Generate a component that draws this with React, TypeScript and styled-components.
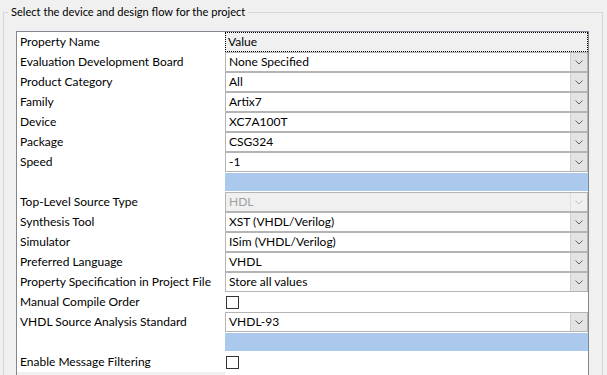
import React from "react";
import styled, { createGlobalStyle } from "styled-components";

const Global = createGlobalStyle`
  html, body { margin: 0; padding: 0; background: #f0f0f0; }
  body { font-family: Lato, "Segoe UI", sans-serif; font-size: 12px; color: #000; }
`;

const Page = styled.div`
  width: 607px;
  height: 375px;
  overflow: hidden;
  padding: 4px 4px 0 3px;
  box-sizing: border-box;
`;

const Group = styled.fieldset`
  margin: 0;
  padding: 11px 13px 40px 12px;
  border: 1px solid #d5d5d5;
  border-radius: 0;
  min-width: 0;
`;

const Legend = styled.legend`
  margin-left: -8px;
  padding: 0 3px;
  line-height: 16px;
  height: 16px;
  font-size: 11.1px;
`;

const Table = styled.div`
  border: 1px solid #828790;
  border-bottom: none;
  background: #ffffff;
  display: grid;
  grid-template-columns: 208px 1fr;
  grid-auto-rows: 20px;
`;

const Label = styled.div<{ $gray?: boolean }>`
  padding-left: 3px;
  line-height: 20px;
  white-space: nowrap;
  background: ${(p) => (p.$gray ? "#f0f0f0" : "#ffffff")};
`;

const HeaderValue = styled.div`
  background: #f0f0f0;
  outline: 1px dotted #000;
  outline-offset: -1px;
  padding-left: 3px;
  line-height: 20px;
`;

const Combo = styled.div<{ $disabled?: boolean }>`
  display: flex;
  border: 1px solid #b4b4b4;
  background: ${(p) => (p.$disabled ? "#f0f0f0" : "#ffffff")};
  color: ${(p) => (p.$disabled ? "#a0a0a0" : "#000")};
  box-sizing: border-box;
  height: 20px;
`;

const ComboText = styled.div`
  flex: 1;
  padding-left: 3px;
  line-height: 18px;
  white-space: nowrap;
`;

const ComboButton = styled.div<{ $disabled?: boolean }>`
  width: 16px;
  background: ${(p) => (p.$disabled ? "#f0f0f0" : "#e3e3e3")};
  border-left: 1px solid ${(p) => (p.$disabled ? "#e0e0e0" : "#cfcfcf")};
  display: flex;
  align-items: center;
  justify-content: center;
`;

const Blank = styled.div`
  background: #abc9ed;
  border-top: 1px solid #ffffff;
  border-bottom: 1px solid #ffffff;
  box-sizing: border-box;
`;

const CheckCell = styled.div`
  display: flex;
  align-items: center;
  padding-left: 1px;
`;

const Box = styled.div`
  width: 11px;
  height: 11px;
  border: 1px solid #333333;
  background: #fff;
`;

const WhiteCell = styled.div`
  background: #fff;
`;

const Chevron = ({ color }: { color: string }) => (
  <svg width="8" height="5" viewBox="0 0 8 5">
    <path d="M0.5 0.5 L4 4 L7.5 0.5" fill="none" stroke={color} strokeWidth="1" />
  </svg>
);

type Row =
  | { kind: "combo"; label: string; value: string; disabled?: boolean }
  | { kind: "check"; label: string }
  | { kind: "blank" };

const rows: Row[] = [
  { kind: "combo", label: "Evaluation Development Board", value: "None Specified" },
  { kind: "combo", label: "Product Category", value: "All" },
  { kind: "combo", label: "Family", value: "Artix7" },
  { kind: "combo", label: "Device", value: "XC7A100T" },
  { kind: "combo", label: "Package", value: "CSG324" },
  { kind: "combo", label: "Speed", value: "-1" },
  { kind: "blank" },
  { kind: "combo", label: "Top-Level Source Type", value: "HDL", disabled: true },
  { kind: "combo", label: "Synthesis Tool", value: "XST (VHDL/Verilog)" },
  { kind: "combo", label: "Simulator", value: "ISim (VHDL/Verilog)" },
  { kind: "combo", label: "Preferred Language", value: "VHDL" },
  { kind: "combo", label: "Property Specification in Project File", value: "Store all values" },
  { kind: "check", label: "Manual Compile Order" },
  { kind: "combo", label: "VHDL Source Analysis Standard", value: "VHDL-93" },
  { kind: "blank" },
  { kind: "check", label: "Enable Message Filtering" },
];

export default function App() {
  return (
    <>
      <Global />
      <Page>
        <Group>
          <Legend>Select the device and design flow for the project</Legend>
          <Table>
            <Label>Property Name</Label>
            <HeaderValue>Value</HeaderValue>
            {rows.map((r, i) => {
              if (r.kind === "blank") {
                return (
                  <React.Fragment key={i}>
                    <Label />
                    <Blank />
                  </React.Fragment>
                );
              }
              if (r.kind === "check") {
                return (
                  <React.Fragment key={i}>
                    <Label>{r.label}</Label>
                    <CheckCell>
                      <Box />
                    </CheckCell>
                  </React.Fragment>
                );
              }
              return (
                <React.Fragment key={i}>
                  <Label>{r.label}</Label>
                  <Combo $disabled={r.disabled}>
                    <ComboText>{r.value}</ComboText>
                    <ComboButton $disabled={r.disabled}>
                      <Chevron color={r.disabled ? "#c4c4c4" : "#606060"} />
                    </ComboButton>
                  </Combo>
                </React.Fragment>
              );
            })}
            <Label $gray />
            <WhiteCell />
          </Table>
        </Group>
      </Page>
    </>
  );
}
